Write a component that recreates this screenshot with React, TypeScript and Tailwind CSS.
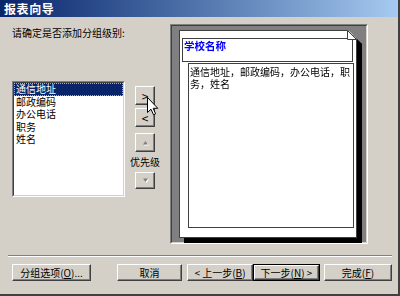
import React from "react";

const btn =
  "flex items-center justify-center border border-t-white border-l-white border-b-[#404040] border-r-[#404040] shadow-[inset_-1px_-1px_0_#808080] bg-[#d4d0c8] text-black";

function Tri({ up }: { up: boolean }) {
  return (
    <svg width="9" height="7" viewBox="0 0 9 7">
      {up ? (
        <>
          <polygon points="2,5.5 4.5,2 7,5.5" fill="#ffffff" transform="translate(1,1)" />
          <polygon points="2,5.5 4.5,2 7,5.5" fill="#808080" />
        </>
      ) : (
        <>
          <polygon points="2,1.5 4.5,5 7,1.5" fill="#ffffff" transform="translate(1,1)" />
          <polygon points="2,1.5 4.5,5 7,1.5" fill="#808080" />
        </>
      )}
    </svg>
  );
}

export default function App() {
  const items = ["通信地址", "邮政编码", "办公电话", "职务", "姓名"];
  return (
    <div
      className="w-[400px] h-[296px] bg-[#d4d0c8] flex flex-col overflow-hidden border-r-2 border-b-2 border-r-[#404040] border-b-[#404040] text-[10px] leading-[12px] text-black"
      style={{ fontFamily: '"Noto Sans CJK SC", "Liberation Sans", sans-serif' }}
    >
      {/* Title bar */}
      <div className="h-[17px] shrink-0 flex items-center pl-[4px] bg-linear-to-r from-[#0a246a] to-[#a6caf0] text-white font-bold text-[12px] tracking-[0.6px]">
        报表向导
      </div>

      {/* Content row */}
      <div className="flex mt-[7px] ml-[12px] shrink-0">
        {/* Left column */}
        <div className="w-[158px] flex flex-col">
          <div className="mt-[3px] h-[12px]">请确定是否添加分组级别:</div>
          <div className="flex mt-[42px]">
            {/* List box */}
            <div className="w-[113px] h-[116px] border border-t-[#808080] border-l-[#808080] border-b-white border-r-white">
              <div className="w-full h-full bg-white border border-t-[#404040] border-l-[#404040] border-b-[#d4d0c8] border-r-[#d4d0c8] flex flex-col">
                {items.map((it, i) => (
                  <div
                    key={it}
                    className={
                      i === 0
                        ? "h-[12.5px] pl-[1px] bg-[#0a246a] text-white border border-dotted border-[#b0b0b0] leading-[10.5px]"
                        : "h-[12.5px] pl-[2px] leading-[12.5px]"
                    }
                  >
                    {it}
                  </div>
                ))}
              </div>
            </div>

            {/* Buttons column */}
            <div className="relative w-[34px] ml-[3px] flex flex-col items-center">
              <div className={`${btn} w-[20px] h-[19px] mt-[5px] text-[12px]`}>&gt;</div>
              <div className={`${btn} w-[20px] h-[19px] mt-[3px] text-[12px]`}>&lt;</div>
              <div className={`${btn} w-[20px] h-[19px] mt-[6px]`}>
                <Tri up={true} />
              </div>
              <div className="mt-[4px] h-[12px] whitespace-nowrap">优先级</div>
              <div className={`${btn} w-[20px] h-[17px] mt-[4px]`}>
                <Tri up={false} />
              </div>
              {/* mouse cursor */}
              <svg
                className="absolute left-[19px] top-[16px]"
                width="12"
                height="19"
                viewBox="0 0 12 19"
              >
                <path
                  d="M0.5 0.5 L0.5 15.5 L4 12.2 L6.5 17.8 L8.6 16.8 L6.2 11.3 L10.8 11.3 Z"
                  fill="#ffffff"
                  stroke="#000000"
                  strokeWidth="1"
                  strokeLinejoin="miter"
                />
              </svg>
            </div>
          </div>
        </div>

        {/* Preview frame */}
        <div className="w-[198px] h-[220px] border border-t-[#808080] border-l-[#808080] border-b-white border-r-white">
          <div className="w-full h-full bg-[#808080] border border-t-[#404040] border-l-[#404040] border-b-[#d4d0c8] border-r-[#d4d0c8] pl-[7px] pt-[4px]">
            <div className="relative w-[178px] h-[208px] [filter:drop-shadow(5px_5px_0_#000)]">
              <div className="w-full h-full bg-white border border-[#404040] [clip-path:polygon(0_0,calc(100%-9px)_0,100%_9px,100%_100%,0_100%)] flex flex-col">
                <div className="ml-[2px] mt-[7px] w-[171px] h-[24px] border border-[#404040] pl-[1px] pt-[1px] text-[#0000ff] font-bold text-[10.5px] leading-[12px]">
                  学校名称
                </div>
                <div className="ml-[8px] mt-[1px] w-[166px] h-[165px] border border-[#404040] pl-[1px] pt-[2px] leading-[12px]">
                  通信地址，邮政编码，办公电话，职
                  <br />
                  务，姓名
                </div>
              </div>
              <svg className="absolute right-0 top-0" width="10" height="10" viewBox="0 0 10 10">
                <polygon points="0.5,0.5 0.5,9.5 9.5,9.5" fill="#ffffff" stroke="#404040" strokeWidth="1" />
              </svg>
            </div>
          </div>
        </div>
      </div>

      {/* Separator */}
      <div className="mt-[11px] ml-[8px] mr-[6px] h-[2px] border-t border-t-[#808080] border-b border-b-white shrink-0" />

      {/* Bottom buttons */}
      <div className="flex mt-[7px] pl-[12px] shrink-0">
        <div className={`${btn} w-[79px] h-[17px]`}>
          分组选项(<span className="underline">O</span>)...
        </div>
        <div className={`${btn} w-[65px] h-[17px] ml-[26px]`}>取消</div>
        <div className={`${btn} w-[66px] h-[17px] ml-[5px]`}>
          &lt; 上一步(<span className="underline">B</span>)
        </div>
        <div className="w-[67px] h-[17px] border border-black flex">
          <div className="flex-1 flex items-center justify-center border border-t-white border-l-white border-b-[#404040] border-r-[#404040] shadow-[inset_-1px_-1px_0_#808080]">
            下一步(<span className="underline">N</span>) &gt;
          </div>
        </div>
        <div className={`${btn} w-[68px] h-[17px] ml-[4px]`}>
          完成(<span className="underline">F</span>)
        </div>
      </div>
    </div>
  );
}
